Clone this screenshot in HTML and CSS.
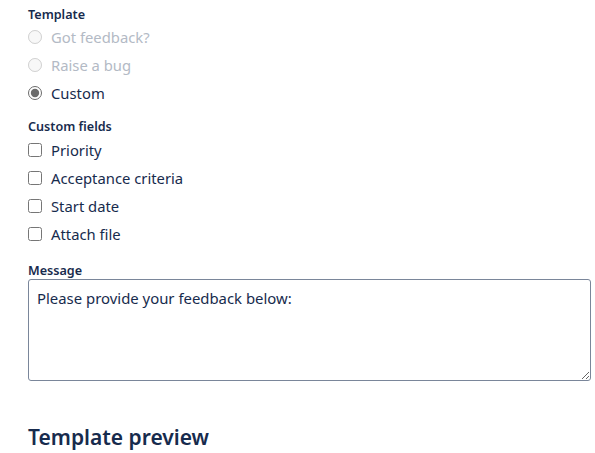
FILE: index.html
```html
<!DOCTYPE html>
<html lang="en">
<head>
    <meta charset="UTF-8">
    <title>Template</title>
    <link rel="stylesheet" href="styles.css">
</head>
<body>
    <div class="page">
        <div class="field">
            <div class="label">Template</div>
            <label class="option disabled"><input type="radio" name="tpl" disabled> Got feedback?</label>
            <label class="option disabled"><input type="radio" name="tpl" disabled> Raise a bug</label>
            <label class="option"><input type="radio" name="tpl" checked> Custom</label>
        </div>

        <div class="field fields">
            <div class="label">Custom fields</div>
            <label class="option"><input type="checkbox"> Priority</label>
            <label class="option"><input type="checkbox"> Acceptance criteria</label>
            <label class="option"><input type="checkbox"> Start date</label>
            <label class="option"><input type="checkbox"> Attach file</label>
        </div>

        <div class="field message">
            <label class="label" for="msg">Message</label>
            <textarea id="msg" rows="5">Please provide your feedback below:</textarea>
        </div>

        <h2 class="preview-title">Template preview</h2>
    </div>
</body>
</html>
```

FILE: styles.css
```css
body {
    margin: 7px 4px 8px 8px;
    font-family: "Noto Sans", "Open Sans", sans-serif;
    color: #172b4d;
    background: #fff;
}
.page {
    padding: 0 0 0 20px;
}
.label {
    display: block;
    font-size: 12.6px;
    font-weight: 600;
    line-height: 16px;
}
.field {
    margin-bottom: 12px;
}
.fields .label {
    margin-bottom: 1px;
}
.option {
    display: flex;
    align-items: center;
    height: 28px;
    font-size: 14.8px;
}
.option input {
    width: 14px;
    height: 14px;
    margin: 0 9px 0 0;
    accent-color: #6b6b6b;
}
.option.disabled {
    color: #b3bac5;
}
.message {
    margin-top: 15px;
}
textarea {
    display: block;
    box-sizing: border-box;
    width: 100%;
    height: 102px;
    padding: 8px;
    border: 1px solid #7a869a;
    border-radius: 3px;
    font-family: inherit;
    font-size: 14.9px;
    color: #172b4d;
    resize: both;
}
.preview-title {
    margin: 42px 0 0;
    font-size: 21px;
    font-weight: 600;
}
```
